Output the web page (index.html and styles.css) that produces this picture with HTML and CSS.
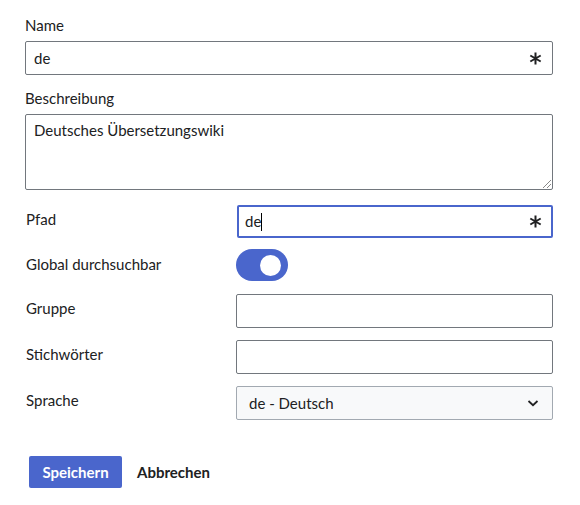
FILE: index.html
```html
<!DOCTYPE html>
<html lang="de">
<head>
<meta charset="utf-8">
<link rel="stylesheet" href="styles.css">
</head>
<body>
<form class="form">
  <div class="field">
    <label class="label-top">Name</label>
    <div class="input required"><span class="value">de</span><svg class="star" width="13" height="13" viewBox="0 0 13 13"><path d="M6.5 0.5 V12.5 M1.3 3.5 L11.7 9.5 M1.3 9.5 L11.7 3.5" stroke="#202122" stroke-width="2" fill="none"/></svg></div>
  </div>
  <div class="field">
    <label class="label-top">Beschreibung</label>
    <div class="textarea"><span class="value">Deutsches Übersetzungswiki</span><span class="grip"></span></div>
  </div>
  <div class="grid">
    <label class="label-side">Pfad</label>
    <div class="input focused required"><span class="value">de<span class="caret"></span></span><svg class="star" width="13" height="13" viewBox="0 0 13 13"><path d="M6.5 0.5 V12.5 M1.3 3.5 L11.7 9.5 M1.3 9.5 L11.7 3.5" stroke="#202122" stroke-width="2" fill="none"/></svg></div>

    <label class="label-side">Global durchsuchbar</label>
    <div class="toggle-cell"><span class="toggle"><span class="knob"></span></span></div>

    <label class="label-side">Gruppe</label>
    <div class="input"></div>

    <label class="label-side">Stichwörter</label>
    <div class="input"></div>

    <label class="label-side">Sprache</label>
    <div class="select"><span class="value">de - Deutsch</span>
      <svg class="chev" width="14" height="14" viewBox="0 0 14 14"><path d="M2.5 5 L7 9.2 L11.5 5" fill="none" stroke="#202122" stroke-width="1.8"/></svg>
    </div>
  </div>
  <div class="actions">
    <button type="button" class="btn primary">Speichern</button>
    <button type="button" class="btn quiet">Abbrechen</button>
  </div>
</form>
</body>
</html>
```
FILE: styles.css
```css
* { box-sizing: border-box; }
html, body { margin: 0; padding: 0; background: #fff; }
body {
  font-family: Lato, "Noto Sans", sans-serif;
  font-size: 15px;
  color: #202122;
}
.form {
  width: 528px;
  margin: 0 0 0 25px;
  padding-top: 15px;
}
.field { margin-bottom: 13px; }
.label-top {
  display: block;
  line-height: 20px;
  margin-bottom: 6px;
}
.input {
  height: 34px;
  border: 1px solid #72777d;
  border-radius: 2px;
  display: flex;
  align-items: center;
  justify-content: space-between;
  padding: 0 10px 0 8px;
  background: #fff;
}
.input .value { font-size: 15px; line-height: 18px; }
.star { display: block; }
.input.focused {
  border: 2px solid #4a66cc;
  height: 33px;
  padding-left: 6px;
  padding-right: 9px;
}
.caret {
  display: inline-block;
  width: 1px;
  height: 18px;
  background: #000;
  vertical-align: -4px;
}
.textarea {
  position: relative;
  height: 76px;
  border: 1px solid #72777d;
  border-radius: 2px;
  padding: 6px 8px;
}
.textarea .value { font-size: 15px; line-height: 18px; }
.grip {
  position: absolute;
  right: 1px;
  bottom: 1px;
  width: 8px;
  height: 8px;
  background: linear-gradient(135deg, transparent 45%, #888 45%, #888 52%, transparent 52%, transparent 70%, #888 70%, #888 77%, transparent 77%);
}
.grid {
  display: grid;
  grid-template-columns: 211px 317px;
  grid-template-rows: 33px 32px 34px 34px 34px;
  row-gap: 12px;
  margin-top: 15px;
}
.label-side {
  line-height: 20px;
  padding-top: 4px;
  padding-left: 1px;
}
.grid .input.focused { margin-left: 1px; }
.toggle-cell { margin-top: -1px; height: 32px; display: flex; align-items: center; }
.toggle {
  position: relative;
  display: block;
  width: 52px;
  height: 32px;
  border-radius: 16px;
  background: #4a66cc;
}
.knob {
  position: absolute;
  top: 6px;
  right: 7px;
  width: 21px;
  height: 21px;
  border-radius: 50%;
  background: #fff;
}
.select {
  height: 34px;
  border: 1px solid #a2a9b1;
  border-radius: 2px;
  background: #f8f9fa;
  display: flex;
  align-items: center;
  justify-content: space-between;
  padding: 0 12px 0 12px;
}
.select .value { font-size: 15px; }
.actions {
  display: flex;
  align-items: center;
  gap: 15px;
  margin-top: 36px;
  padding-left: 4px;
}
.btn {
  font-family: Lato, "Noto Sans", sans-serif;
  font-size: 15px;
  font-weight: bold;
  height: 32px;
  border-radius: 2px;
  border: none;
  cursor: pointer;
}
.btn.primary {
  background: #4a66cc;
  color: #fff;
  padding: 0 12px;
  width: 93px;
}
.btn.quiet {
  background: transparent;
  color: #202122;
  padding: 0;
}
```
